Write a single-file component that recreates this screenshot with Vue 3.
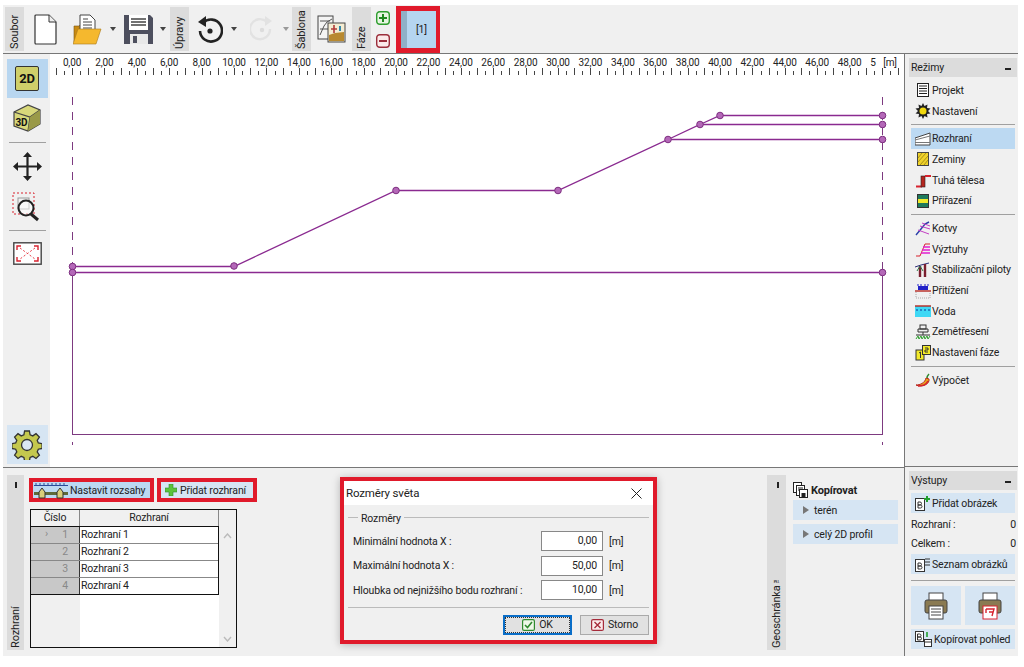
<template>
  <div class="app">
    <!-- top toolbar -->
    <div class="toolbar">
      <div class="vlabel" style="width: 19px">Soubor</div>
      <svg class="tool" style="margin-left: 10px" width="23" height="31" viewBox="0 0 23 31">
        <path d="M2 1h13l7 7v21a1 1 0 0 1-1 1H2a1 1 0 0 1-1-1V2a1 1 0 0 1 1-1z" fill="#fff" stroke="#333" stroke-width="1.2" />
        <path d="M15 1v7h7" fill="#eee" stroke="#333" />
      </svg>
      <svg class="tool" style="margin-left: 16px" width="29" height="31" viewBox="0 0 29 31">
        <path d="M1 12h5l2-2h10v18H1z" fill="#c98a12" stroke="#7a5510" stroke-width=".6" />
        <path d="M7 1h10l5 5v14H7z" fill="#fff" stroke="#444" />
        <path d="M10 8h9M10 11h9M10 14h9M10 5h5" stroke="#444" />
        <path d="M5 15h23l-5 15H0z" fill="#f5b82e" stroke="#a97a1c" stroke-width=".6" />
      </svg>
      <span class="caret" style="margin-left: 8px"></span>
      <svg class="tool" style="margin-left: 8px" width="29" height="30" viewBox="0 0 29 30">
        <path d="M0 1h26l3 3v26H0z" fill="#4d4f5e" />
        <rect x="5" y="1" width="19" height="15" fill="#fff" />
        <path d="M7 5h15M7 8h15M7 11h15" stroke="#444" stroke-width="1.4" />
        <rect x="6" y="20" width="18" height="10" fill="#e8e8e8" />
        <rect x="9" y="22" width="4" height="7" fill="#4d4f5e" />
      </svg>
      <span class="caret" style="margin-left: 7px"></span>
      <div class="vlabel" style="margin-left: 4px; width: 19px">Úpravy</div>
      <svg class="tool" style="margin-left: 8px" width="26" height="28" viewBox="0 0 26 28">
        <path d="M6 8a11 11 0 1 1-3 8" fill="none" stroke="#222" stroke-width="2.6" />
        <path d="M9 1v11L1 7z" fill="#222" />
        <circle cx="13" cy="16" r="2.6" fill="#222" />
      </svg>
      <span class="caret" style="margin-left: 8px"></span>
      <svg class="tool" style="margin-left: 13px" width="24" height="26" viewBox="0 0 24 26">
        <path d="M17 6a10 10 0 1 0 3 7" fill="none" stroke="#e2e2e2" stroke-width="2.4" />
        <path d="M15 0v10l7-5z" fill="#e2e2e2" />
        <circle cx="12" cy="14" r="2.2" fill="#dcdcdc" />
      </svg>
      <span class="caret dim" style="margin-left: 9px"></span>
      <div class="vlabel" style="margin-left: 3px; width: 19px">Šablona</div>
      <svg class="tool" style="margin-left: 6px" width="29" height="28" viewBox="0 0 29 28">
        <rect x="1" y="1" width="15" height="23" fill="#f4f4f4" stroke="#444" />
        <path d="M3 20l4-9 3-4 5-3M3 6h10M3 14h8" stroke="#555" fill="none" />
        <rect x="11" y="8" width="17" height="19" fill="#f4ecd2" stroke="#444" />
        <path d="M12 20l6-2 9-1v9H12z" fill="#b8892f" />
        <path d="M17 10v8M14 14h6" stroke="#b03a3a" stroke-width="1.6" />
        <path d="M23 11v5" stroke="#38a" stroke-width="2" />
      </svg>
      <div class="vlabel" style="margin-left: 6px; width: 19px">Fáze</div>
      <div class="phase-buttons">
        <svg width="14" height="14" viewBox="0 0 14 14">
          <rect x=".7" y=".7" width="12.6" height="12.6" rx="3" fill="#e7f5e2" stroke="#2f9e2f" stroke-width="1.4" />
          <path d="M7 3v8M3 7h8" stroke="#1f8a1f" stroke-width="2" />
        </svg>
        <svg width="14" height="14" viewBox="0 0 14 14">
          <rect x=".7" y=".7" width="12.6" height="12.6" rx="3" fill="#fbeaea" stroke="#9c2f3c" stroke-width="1.4" />
          <path d="M3 7h8" stroke="#9c2f3c" stroke-width="2" />
        </svg>
      </div>
      <div class="phase-tab">
        <span class="phase-strip"></span>
        <span class="phase-name">[1]</span>
      </div>
    </div>

    <div class="workspace">
      <div class="main">
        <div class="middle">
          <!-- left view tools -->
          <div class="viewbar">
            <div class="view-btn active">
              <div class="key2d">2D</div>
            </div>
            <svg class="view-icon" style="margin-top: 6px" width="30" height="28" viewBox="0 0 30 28">
              <path d="M2 8l14-7 12 5v14l-12 7-14-5z" fill="#d8d87a" stroke="#444" stroke-width="1.2" />
              <path d="M2 8l16 5 10-7M18 13l-2 14" fill="none" stroke="#444" stroke-width="1.2" />
              <path d="M18 13l10-7v14l-12 7z" fill="#9a9a48" />
              <text x="3.5" y="22" class="key3d">3D</text>
            </svg>
            <hr class="sep" style="margin-top: 10px" />
            <svg class="view-icon" style="margin-top: 9px" width="29" height="29" viewBox="0 0 29 29">
              <path d="M14.5 3v23M3 14.5h23" stroke="#222" stroke-width="2.2" />
              <path d="M14.5 0l4.5 5h-9zM14.5 29l4.5-5h-9zM0 14.5l5-4.5v9zM29 14.5l-5-4.5v9z" fill="#222" />
            </svg>
            <svg class="view-icon" style="margin-top: 11px" width="30" height="30" viewBox="0 0 30 30">
              <rect x="1" y="1" width="21" height="21" fill="none" stroke="#d8222f" stroke-dasharray="2 2" />
              <rect x="6" y="6" width="11" height="11" fill="none" stroke="#999" />
              <circle cx="14" cy="16" r="7.5" fill="#fff" fill-opacity=".5" stroke="#222" stroke-width="2" />
              <path d="M19 22l7 6" stroke="#222" stroke-width="3" />
            </svg>
            <hr class="sep" style="margin-top: 8px" />
            <svg class="view-icon" style="margin-top: 11px" width="29" height="23" viewBox="0 0 29 23">
              <rect x=".8" y=".8" width="27.4" height="21.4" fill="#fff" stroke="#444" stroke-width="1.4" />
              <path d="M7 6l15 11M22 6L7 17" stroke="#e8404a" stroke-dasharray="2 2" />
              <path d="M4 8V4h4M25 8V4h-4M4 15v4h4M25 15v4h-4" fill="none" stroke="#d8222f" stroke-width="1.4" />
            </svg>
            <div class="view-btn gear">
              <svg width="30" height="30" viewBox="0 0 30 30">
                <path d="M12.6 1h4.8l.7 3.8 2.7 1.1 3.2-2.2 3.4 3.4-2.2 3.2 1.1 2.7 3.8.7v4.8l-3.8.7-1.1 2.7 2.2 3.2-3.4 3.4-3.2-2.2-2.7 1.1-.7 3.8h-4.8l-.7-3.8-2.7-1.1-3.2 2.2-3.4-3.4 2.2-3.2-1.1-2.7-3.8-.7v-4.8l3.8-.7 1.1-2.7-2.2-3.2 3.4-3.4 3.2 2.2 2.7-1.1z" fill="#c4c84e" stroke="#333" stroke-width="1.3" />
                <circle cx="15" cy="15" r="5.5" fill="#dbe7f3" stroke="#333" stroke-width="1.3" />
              </svg>
            </div>
          </div>

          <!-- drawing canvas -->
          <svg class="canvas" viewBox="50 54 854 413" width="854" height="413">
            <text v-for="r in rulerLabels" :key="r.x" :x="r.x" y="66" class="ruler-text" text-anchor="middle">{{ r.text }}</text>
            <text x="873" y="66" class="ruler-text" text-anchor="middle">5</text>
            <text x="890" y="66" class="ruler-text" text-anchor="middle">[m]</text>
            <line v-for="t in ticks" :key="t.x" :x1="t.x" :x2="t.x" :y1="t.top" y2="75" stroke="#444" />

            <line x1="72.5" y1="97" x2="72.5" y2="445" class="dash" />
            <line x1="882.5" y1="97" x2="882.5" y2="445" class="dash" />
            <path d="M72.5 272.5V434.5H882.5V272.5" class="bound" />
            <polyline v-for="(l, i) in lines" :key="i" :points="l" class="iface" />
            <circle v-for="(p, i) in points" :key="i" :cx="p[0]" :cy="p[1]" r="3.3" class="node" />
          </svg>
        </div>

        <div class="bottom">
          <div class="vlabel side">
            <span>Rozhraní</span>
            <i class="pin"></i>
          </div>
          <div class="iface-pane">
            <div class="pane-buttons">
              <div class="marked wide">
                <div class="btn">
                  <svg width="34" height="17" viewBox="0 0 34 17">
                    <path d="M0 3.5h34M2 1v3M6 1v3M10 1v3M14 1v3M18 1v3M22 1v3M26 1v3M30 1v3" stroke="#2a4a9a" />
                    <rect x="0" y="10" width="34" height="3" fill="#5e6a3a" />
                    <path d="M8 6l-3 4v6h6v-6zM26 6l-3 4v6h6v-6z" fill="#d9cf7a" stroke="#333" />
                  </svg>
                  <span>Nastavit rozsahy</span>
                </div>
              </div>
              <div class="marked">
                <div class="btn">
                  <svg width="12" height="12" viewBox="0 0 12 12">
                    <path d="M4 0h4v4h4v4H8v4H4V8H0V4h4z" fill="#5cc23a" stroke="#2f8a2f" stroke-width=".6" />
                  </svg>
                  <span>Přidat rozhraní</span>
                </div>
              </div>
            </div>
            <div class="grid">
              <div class="grid-main">
                <div class="grid-head">
                  <div class="h-num">Číslo</div>
                  <div class="h-name">Rozhraní</div>
                </div>
                <div class="grid-rows">
                  <div v-for="(row, i) in rows" :key="row" class="grid-row">
                    <div class="c-num">
                      <span v-if="i === 0" class="cur">&#x203A;</span>
                      {{ i + 1 }}
                    </div>
                    <div class="c-name">{{ row }}</div>
                  </div>
                </div>
                <div class="grid-empty"><div class="empty-num"></div></div>
              </div>
              <div class="scroll">
                <svg width="9" height="6" viewBox="0 0 9 6"><path d="M1 5l3.5-4L8 5" fill="none" stroke="#bbb" stroke-width="1.4" /></svg>
                <svg width="9" height="6" viewBox="0 0 9 6"><path d="M1 1l3.5 4L8 1" fill="none" stroke="#bbb" stroke-width="1.4" /></svg>
              </div>
            </div>
          </div>

          <div class="vlabel side geo">
            <span>Geoschránka™</span>
            <i class="pin"></i>
          </div>
          <div class="geo-pane">
            <div class="geo-title">
              <svg width="15" height="16" viewBox="0 0 15 16">
                <rect x=".5" y=".5" width="8" height="10" fill="#fff" stroke="#222" />
                <rect x="3.5" y="3.5" width="8" height="10" fill="#fff" stroke="#222" />
                <rect x="6.5" y="7.5" width="8" height="8" fill="#fff" stroke="#222" />
                <path d="M5 6h5M5 8h2" stroke="#222" />
                <rect x="8.5" y="11" width="4" height="4" fill="#222" />
              </svg>
              <b>Kopírovat</b>
            </div>
            <div class="geo-btn"><i class="tri"></i>terén</div>
            <div class="geo-btn"><i class="tri"></i>celý 2D profil</div>
          </div>

          <!-- dialog over the bottom panel -->
          <div class="dialog">
            <div class="dlg-title">
              <span>Rozměry světa</span>
              <svg width="11" height="11" viewBox="0 0 11 11"><path d="M.5.5l10 10M10.5.5l-10 10" stroke="#222" /></svg>
            </div>
            <div class="dlg-body">
              <div class="dlg-group"><span>Rozměry</span></div>
              <div v-for="f in fields" :key="f.label" class="dlg-row">
                <label>{{ f.label }}</label>
                <div class="dlg-input">{{ f.value }}</div>
                <span class="unit">[m]</span>
              </div>
              <div class="dlg-foot">
                <div class="dlg-btn ok">
                  <svg width="13" height="12" viewBox="0 0 13 12">
                    <rect x=".6" y=".6" width="11.8" height="10.8" rx="1.5" fill="#eef8e8" stroke="#2f8a2f" stroke-width="1.2" />
                    <path d="M3 6l2.5 2.5L10 3" fill="none" stroke="#2f8a2f" stroke-width="1.6" />
                  </svg>
                  OK
                </div>
                <div class="dlg-btn">
                  <svg width="13" height="12" viewBox="0 0 13 12">
                    <rect x=".6" y=".6" width="11.8" height="10.8" rx="1.5" fill="#fbeaea" stroke="#a62b3a" stroke-width="1.2" />
                    <path d="M3.5 3l6 6M9.5 3l-6 6" stroke="#a62b3a" stroke-width="1.4" />
                  </svg>
                  Storno
                </div>
              </div>
            </div>
          </div>
        </div>
      </div>

      <!-- right column -->
      <div class="right">
        <div class="modes">
          <div class="panel-head"><span>Režimy</span><i class="dash-mark"></i></div>
          <div class="mode-list">
            <template v-for="m in modes" :key="m.name">
              <hr v-if="m.sep" class="sep wide-sep" />
              <div class="mode" :class="{ current: m.active }">
                <svg width="16" height="16" viewBox="0 0 16 16" v-html="m.icon"></svg>
                <span>{{ m.name }}</span>
              </div>
            </template>
          </div>
        </div>
        <div class="outputs">
          <div class="panel-head"><span>Výstupy</span><i class="dash-mark"></i></div>
          <div class="out-btn">
            <svg width="15" height="15" viewBox="0 0 15 15">
              <rect x=".5" y="2.5" width="9" height="12" fill="#fff" stroke="#333" />
              <path d="M3 6h2a1.5 1.5 0 0 1 0 3H3zm0 3h2.500a1.500 1.500 0 0 1 0 3H3z" fill="none" stroke="#333" />
              <path d="M9 3h6M12 0v6" stroke="#23a02f" stroke-width="2" />
            </svg>
            Přidat obrázek
          </div>
          <div class="count" style="margin-top: 2px"><span>Rozhraní :</span><span>0</span></div>
          <div class="count"><span>Celkem :</span><span>0</span></div>
          <div class="out-btn" style="margin-top: 1px">
            <svg width="15" height="15" viewBox="0 0 15 15">
              <rect x=".5" y="2.5" width="9" height="12" fill="#fff" stroke="#333" />
              <path d="M3 6h2a1.500 1.500 0 0 1 0 3H3zm0 3h2.500a1.500 1.500 0 0 1 0 3H3z" fill="none" stroke="#333" />
              <path d="M10 2h5M10 5h5M10 8h5" stroke="#333" />
            </svg>
            Seznam obrázků
          </div>
          <hr class="sep out-sep" />
          <div class="print-row">
            <div class="print-btn">
              <svg width="24" height="28" viewBox="0 0 24 28">
                <rect x="5" y="1" width="14" height="8" fill="#fff" stroke="#444" />
                <rect x="1" y="8" width="22" height="13" rx="2" fill="#8a7a52" stroke="#444" />
                <rect x="5" y="14" width="14" height="13" fill="#fff" stroke="#444" />
                <path d="M7 17h10M7 20h10M7 23h10" stroke="#444" />
              </svg>
            </div>
            <div class="print-btn">
              <svg width="24" height="28" viewBox="0 0 24 28">
                <rect x="5" y="1" width="14" height="8" fill="#fff" stroke="#444" />
                <rect x="1" y="8" width="22" height="13" rx="2" fill="#8a7a52" stroke="#444" />
                <rect x="5" y="14" width="14" height="13" fill="#fff" stroke="#d8222f" />
                <path d="M8 17h8l-2 7M11 20h4M8 17v4" fill="none" stroke="#d8222f" stroke-width="1.4" />
              </svg>
            </div>
          </div>
          <div class="out-btn" style="margin-top: 4px">
            <svg width="17" height="16" viewBox="0 0 17 16">
              <rect x=".5" y=".5" width="8" height="10" fill="#fff" stroke="#333" />
              <path d="M2.500 3h2a1.200 1.200 0 0 1 0 3h-2zm0 3h2.500a1.200 1.200 0 0 1 0 3h-2.500z" fill="none" stroke="#333" />
              <path d="M12 1v5" stroke="#23a02f" stroke-width="1.6" />
              <rect x="9.500" y="8.500" width="7" height="7" fill="#fff" stroke="#333" />
              <path d="M9.500 11h7" stroke="#333" />
            </svg>
            Kopírovat pohled
          </div>
        </div>
      </div>
    </div>
  </div>
</template>

<script setup>
const X0 = 72;
const PER_M = 16.2;

// labels every 2 m, only up to 48 - the 50 gets cut by the [m] mark
const rulerLabels = [];
for (let m = 0; m <= 48; m += 2) {
  rulerLabels.push({ x: X0 + m * PER_M, text: m + ",00" });
}

const ticks = [];
for (let i = -2; i <= 102; i++) {
  const x = Math.round(X0 + (i * PER_M) / 2) + 0.5;
  ticks.push({ x, top: i % 2 === 0 ? 68 : 71 });
}

const lines = [
  "72.5,272.5 882.5,272.5",
  "72.5,266.5 234,266.5 396,190.5 558,190.5 668,139.5 882.5,139.5",
  "668,139.5 700,124.5 882.5,124.5",
  "700,124.5 720,115.5 882.5,115.5",
];

const points = [
  [72.5, 266.5], [72.5, 272.5], [234, 266], [396, 190.5], [558, 190.5],
  [668, 139.5], [700, 124.5], [720, 115.5],
  [882.5, 115.5], [882.5, 124.5], [882.5, 139.5], [882.5, 272.5],
];

const rows = ["Rozhraní 1", "Rozhraní 2", "Rozhraní 3", "Rozhraní 4"];

const fields = [
  { label: "Minimální hodnota X :", value: "0,00" },
  { label: "Maximální hodnota X :", value: "50,00" },
  { label: "Hloubka od nejnižšího bodu rozhraní :", value: "10,00" },
];

const modes = [
  { name: "Projekt", icon: '<rect x="2.500" y="1.500" width="11" height="13" fill="#fff" stroke="#222"/><path d="M4 4h8M4 6.500h8M4 9h8M4 11.500h8" stroke="#222"/>' },
  { name: "Nastavení", icon: '<path d="M8 0l1.500 3 3-1.500-.5 3.500 3.500.5L13 8l2.500 2.500-3.500.5.500 3.500-3-1.500L8 16l-1.500-3-3 1.500.5-3.500-3.500-.5L3 8 .5 5.500 4 5l-.5-3.500 3 1.500z" fill="#222"/><circle cx="8" cy="8" r="3.500" fill="#f2d90f"/>' },
  { sep: true, active: true, name: "Rozhraní", icon: '<path d="M0 14V7l15-5v12z" fill="#fff" stroke="#444"/><path d="M0 9l15-4M0 11.500h15" stroke="#777"/>' },
  { name: "Zeminy", icon: '<rect x="2.500" y="1.500" width="11" height="13" fill="#f0d22a" stroke="#444"/><path d="M3 7l4-5M3 11l8-9M5 14l8-9M9 14l4-5" stroke="#a8901a"/>' },
  { name: "Tuhá tělesa", icon: '<path d="M1 14.500h6" stroke="#d8222f" stroke-width="2"/><rect x="6" y="4" width="4" height="11" fill="#b5261f" stroke="#222" stroke-width=".6"/><path d="M10 4h6" stroke="#d8222f" stroke-width="2"/>' },
  { name: "Přiřazení", icon: '<rect x="2.500" y="1.500" width="11" height="13" fill="#f2ea2a" stroke="#333"/><rect x="3" y="2" width="10" height="4" fill="#1f7a5c"/><rect x="3" y="10" width="10" height="4" fill="#1f7a5c"/>' },
  { sep: true, name: "Kotvy", icon: '<path d="M1 15l5-6 4-5 4-2" fill="none" stroke="#2a3fa8" stroke-width="1.400"/><path d="M5 6l10 3M7 3l8 3M3 10l11 4" stroke="#c43fc4"/>' },
  { name: "Výztuhy", icon: '<path d="M1 15h4l5-12h5" fill="none" stroke="#d8222f"/><path d="M8 6h7M7 9h8M6 12h9" stroke="#e21fd0" stroke-width="1.500"/>' },
  { name: "Stabilizační piloty", icon: '<path d="M0 5l6-2 8-2" fill="none" stroke="#2f2f7a"/><path d="M5 4v11M10 2v13" stroke="#7a1f2f" stroke-width="2.400"/><path d="M2 9l3-5 3 5" fill="none" stroke="#2f7a4a"/>' },
  { name: "Přitížení", icon: '<rect x="3" y="3" width="10" height="4" fill="#2222c8"/><path d="M3 3v-2M6 3v-2M10 3v-2M13 3v-2" stroke="#2222c8"/><path d="M0 8h16" stroke="#b5261f" stroke-width="1.400"/><path d="M1 9v6h14V9" fill="none" stroke="#aaa" stroke-dasharray="1 1"/>' },
  { name: "Voda", icon: '<rect x="0" y="3" width="16" height="11" fill="#3fd8f5"/><path d="M0 3h16" stroke="#b5261f" stroke-width="1.400"/><path d="M1 7h2M5 7h2M9 7h2M13 7h2" stroke="#1f6ab5" stroke-width="1.400"/>' },
  { name: "Zemětřesení", icon: '<rect x="5" y="1" width="6" height="4" fill="none" stroke="#333"/><path d="M3 5h10v3H3zM8 8v3M1 11h14" fill="none" stroke="#333"/><path d="M1 15l2-3 1 3 2-3 1 3 2-3 1 3 2-3 1 3 2-3" fill="none" stroke="#2fa02f"/>' },
  { name: "Nastavení fáze", icon: '<rect x="1" y="5" width="8" height="10" fill="#f2ea2a" stroke="#333"/><rect x="7.500" y=".5" width="8" height="9" fill="#f2ea2a" stroke="#333"/><path d="M4 8l1.500-1v6M10 3h3v2h-3v2h3" fill="none" stroke="#333"/>' },
  { sep: true, name: "Výpočet", icon: '<path d="M1 13c4 0 9-2 10-7l3 1c1 5-7 9-13 6z" fill="#e8a51a" stroke="#b5261f"/><path d="M3 14c4 0 8-1 10-5" fill="none" stroke="#d8222f" stroke-width="1.500"/><path d="M12 6c0-2 1-3 2-4" stroke="#2f8a2f" stroke-width="1.500" fill="none"/>' },
];
</script>

<style>
html,
body {
  margin: 0;
  background: #fff;
}
</style>

<style scoped>
.app {
  width: 1024px;
  height: 667px;
  box-sizing: border-box;
  padding: 5px 6px 11px 3px;
  display: flex;
  flex-direction: column;
  font-family: Roboto, "Open Sans", sans-serif;
  font-size: 10.5px;
  letter-spacing: -0.15px;
  color: #222;
  overflow: hidden;
  background: #fff;
}

/* toolbar */
.toolbar {
  height: 49px;
  flex: none;
  box-sizing: border-box;
  padding-left: 2px;
  display: flex;
  align-items: center;
  background: #f0f0f0;
  border-bottom: 1px solid #777;
}
/* turned 180deg, so flex-start and padding-top end up at the visual bottom */
.vlabel {
  height: 44px;
  flex: none;
  box-sizing: border-box;
  padding-top: 2px;
  display: flex;
  align-items: center;
  justify-content: flex-start;
  writing-mode: vertical-rl;
  transform: rotate(180deg);
  background: #dcdcdc;
  font-size: 11px;
}
.tool {
  flex: none;
}
.caret {
  width: 0;
  height: 0;
  flex: none;
  border-left: 3.5px solid transparent;
  border-right: 3.5px solid transparent;
  border-top: 4px solid #444;
}
.caret.dim {
  border-top-color: #999;
}
.phase-buttons {
  margin-left: 5px;
  height: 37px;
  display: flex;
  flex-direction: column;
  justify-content: space-between;
}
.phase-tab {
  margin-left: 6px;
  width: 44px;
  height: 47px;
  flex: none;
  box-sizing: border-box;
  border: 5px solid #e01a2b;
  border-right-width: 4px;
  display: flex;
  background: #b5d5f0;
}
.phase-strip {
  width: 6px;
  background: #8fb0c8;
}
.phase-name {
  flex: 1;
  display: flex;
  align-items: center;
  justify-content: center;
}

.workspace {
  flex: 1;
  min-height: 0;
  display: flex;
}
.main {
  width: 901px;
  flex: none;
  display: flex;
  flex-direction: column;
  border-right: 1px solid #777;
}
.middle {
  height: 413px;
  flex: none;
  display: flex;
  border-bottom: 1px solid #777;
}

/* left tools */
.viewbar {
  width: 47px;
  flex: none;
  box-sizing: border-box;
  padding: 5px 3px 3px 4px;
  display: flex;
  flex-direction: column;
  align-items: center;
  background: #f0f0f0;
}
.view-btn {
  width: 41px;
  height: 39px;
  flex: none;
  display: flex;
  align-items: center;
  justify-content: center;
}
.view-btn.active {
  background: #b8d6f0;
}
.view-btn.gear {
  margin-top: auto;
  background: #d6e5f3;
}
.view-icon {
  flex: none;
}
.key2d {
  width: 24px;
  height: 25px;
  box-sizing: border-box;
  border: 1.5px solid #333;
  border-radius: 2px;
  background: #cfcf6a;
  display: flex;
  align-items: center;
  justify-content: center;
  font-size: 13px;
  font-weight: 700;
  color: #111;
}
.key3d {
  font-size: 10px;
  font-weight: 700;
  fill: #111;
}
.sep {
  width: 100%;
  height: 1px;
  margin: 0;
  border: 0;
  background: #a0a0a0;
  flex: none;
}
.viewbar .sep {
  width: 37px;
}

/* canvas */
.canvas {
  flex: none;
  display: block;
  background: #fff;
}
.ruler-text {
  font-size: 10px;
  fill: #222;
}
.dash {
  stroke: #7d3a80;
  stroke-dasharray: 8 7;
}
.bound {
  fill: none;
  stroke: #7d3a80;
}
.iface {
  fill: none;
  stroke: #8a2a90;
  stroke-width: 1.3;
}
.node {
  fill: #b468b8;
  stroke: #7d2f80;
}

/* bottom panes */
.bottom {
  flex: 1;
  min-height: 0;
  position: relative;
  display: flex;
  box-sizing: border-box;
  padding: 7px 0 5px 4px;
  background: #f0f0f0;
}
.side {
  width: 17px;
  height: 175px;
  position: relative;
}
.geo {
  margin-left: 528px;
  width: 19px;
}
.pin {
  position: absolute;
  left: 7px;
  bottom: 7px;
  width: 2px;
  height: 6px;
  background: #222;
}
.iface-pane {
  width: 210px;
  flex: none;
  margin-left: 5px;
}
.pane-buttons {
  margin-top: 3px;
  display: flex;
  gap: 3px;
}
.marked {
  height: 24px;
  box-sizing: border-box;
  border: 4px solid #e01a2b;
  width: 100px;
  flex: none;
}
.marked.wide {
  width: 125px;
}
.btn {
  height: 100%;
  display: flex;
  align-items: center;
  gap: 3px;
  padding-left: 4px;
  background: #d6e5f3;
  white-space: nowrap;
}
.marked.wide .btn {
  background: #bcd9f2;
  padding-left: 1px;
  gap: 2px;
}
.grid {
  margin-top: 7px;
  margin-left: 1px;
  width: 207px;
  height: 139px;
  box-sizing: border-box;
  border: 1px solid #111;
  display: flex;
  background: #fff;
}
.grid-main {
  flex: 1;
  display: flex;
  flex-direction: column;
}
.grid-head {
  height: 16px;
  display: flex;
  flex: none;
  background: #f0f0f0;
}
.h-num {
  width: 49px;
  text-align: center;
  border-right: 1px solid #888;
  box-sizing: border-box;
  line-height: 16px;
}
.h-name {
  flex: 1;
  text-align: center;
  line-height: 16px;
  border-right: 1px solid #888;
}
.grid-rows {
  border: 1px solid #111;
  border-left: 0;
  flex: none;
}
.grid-row {
  height: 17px;
  box-sizing: border-box;
  display: flex;
  border-bottom: 1px solid #888;
}
.grid-row:last-child {
  border-bottom: 0;
  height: 16px;
}
.c-num {
  width: 49px;
  box-sizing: border-box;
  padding-right: 11px;
  text-align: right;
  background: #c8c8c8;
  color: #888;
  border-right: 1px solid #333;
  line-height: 16px;
  position: relative;
}
.cur {
  position: absolute;
  left: 14px;
  top: -1px;
  color: #888;
}
.c-name {
  flex: 1;
  padding-left: 1px;
  line-height: 16px;
}
.grid-empty {
  flex: 1;
  display: flex;
}
.empty-num {
  width: 49px;
  background: #f0f0f0;
}
.scroll {
  width: 17px;
  flex: none;
  display: flex;
  flex-direction: column;
  align-items: center;
  justify-content: space-between;
  padding: 23px 0 5px;
  box-sizing: border-box;
  background: #f0f0f0;
}

.geo-pane {
  width: 105px;
  flex: none;
  margin-left: 7px;
  padding-top: 5px;
}
.geo-title {
  height: 20px;
  display: flex;
  align-items: center;
  gap: 3px;
  font-size: 11px;
}
.geo-btn {
  margin-top: 4px;
  height: 20px;
  display: flex;
  align-items: center;
  padding-left: 10px;
  background: #d6e5f3;
}
.geo-title + .geo-btn {
  margin-top: 0;
}
.tri {
  width: 0;
  height: 0;
  margin-right: 5px;
  border-top: 4px solid transparent;
  border-bottom: 4px solid transparent;
  border-left: 6px solid #777;
}

/* dialog */
.dialog {
  position: absolute;
  left: 337px;
  top: 9px;
  width: 317px;
  height: 167px;
  box-sizing: border-box;
  border: 4px solid #e01a2b;
  background: #f0f0f0;
  box-shadow: 0 1px 8px rgba(0, 0, 0, 0.25);
  display: flex;
  flex-direction: column;
}
.dlg-title {
  height: 24px;
  flex: none;
  display: flex;
  align-items: center;
  justify-content: space-between;
  padding: 0 11px 0 2px;
  background: #fff;
  font-size: 11.5px;
}
.dlg-body {
  flex: 1;
  padding: 0 4px 0 4px;
  display: flex;
  flex-direction: column;
}
.dlg-group {
  height: 26px;
  flex: none;
  display: flex;
  align-items: center;
  padding-left: 10px;
  background: linear-gradient(#bbb, #bbb) 0 12px / 100% 1px no-repeat;
}
.dlg-group span {
  background: #f0f0f0;
  padding: 0 3px;
}
.dlg-row {
  height: 20px;
  margin-bottom: 4.5px;
  flex: none;
  display: flex;
  align-items: center;
  padding-left: 5px;
}
.dlg-row label {
  width: 188px;
  flex: none;
  white-space: nowrap;
}
.dlg-input {
  width: 62px;
  height: 20px;
  box-sizing: border-box;
  border: 1px solid #888;
  background: #fff;
  text-align: right;
  padding-right: 5px;
  line-height: 18px;
}
.unit {
  margin-left: 6px;
}
.dlg-foot {
  margin-top: 2px;
  padding-top: 7px;
  border-top: 1px solid #bbb;
  display: flex;
  justify-content: flex-end;
  gap: 8px;
}
.dlg-btn {
  width: 69px;
  height: 20px;
  box-sizing: border-box;
  border: 1px solid #aaa;
  background: #e1e1e1;
  display: flex;
  align-items: center;
  justify-content: center;
  gap: 4px;
}
.dlg-btn.ok {
  border: 2px solid #0a6ec8;
  outline: 1px dotted #333;
  outline-offset: -3px;
}

/* right column */
.right {
  flex: 1;
  min-width: 0;
  display: flex;
  flex-direction: column;
  background: #f0f0f0;
  padding: 0 1px 0 4px;
}
.modes {
  height: 413px;
  flex: none;
  box-sizing: border-box;
  padding: 4px 1px 0 4px;
  border-bottom: 1px solid #777;
  margin: 0 -1px 0 -4px;
}
.panel-head {
  height: 19px;
  display: flex;
  align-items: center;
  justify-content: space-between;
  padding: 0 6px 0 2px;
  background: #dcdcdc;
}
.dash-mark {
  width: 6px;
  height: 2px;
  margin-top: 3px;
  background: #222;
}
.mode-list {
  margin-top: 3px;
  padding: 0 2px;
  display: flex;
  flex-direction: column;
}
.mode {
  height: 20.7px;
  flex: none;
  display: flex;
  align-items: center;
  gap: 1px;
  padding-left: 4px;
  white-space: nowrap;
}
.mode.current {
  background: #bcd9f2;
}
.wide-sep {
  margin: 3px 0;
}
.outputs {
  padding-top: 4px;
  display: flex;
  flex-direction: column;
}
.out-btn {
  height: 20px;
  margin: 3px 2px 0;
  display: flex;
  align-items: center;
  gap: 2px;
  padding-left: 4px;
  background: #d6e5f3;
  white-space: nowrap;
}
.count {
  height: 19px;
  margin: 0 1px 0 2px;
  display: flex;
  align-items: center;
  justify-content: space-between;
}
.out-sep {
  width: auto;
  margin: 6px 2px 5px;
}
.print-row {
  margin: 0 2px;
  display: flex;
  justify-content: space-between;
}
.print-btn {
  width: 50px;
  height: 39px;
  display: flex;
  align-items: center;
  justify-content: center;
  background: #d6e5f3;
}
</style>
